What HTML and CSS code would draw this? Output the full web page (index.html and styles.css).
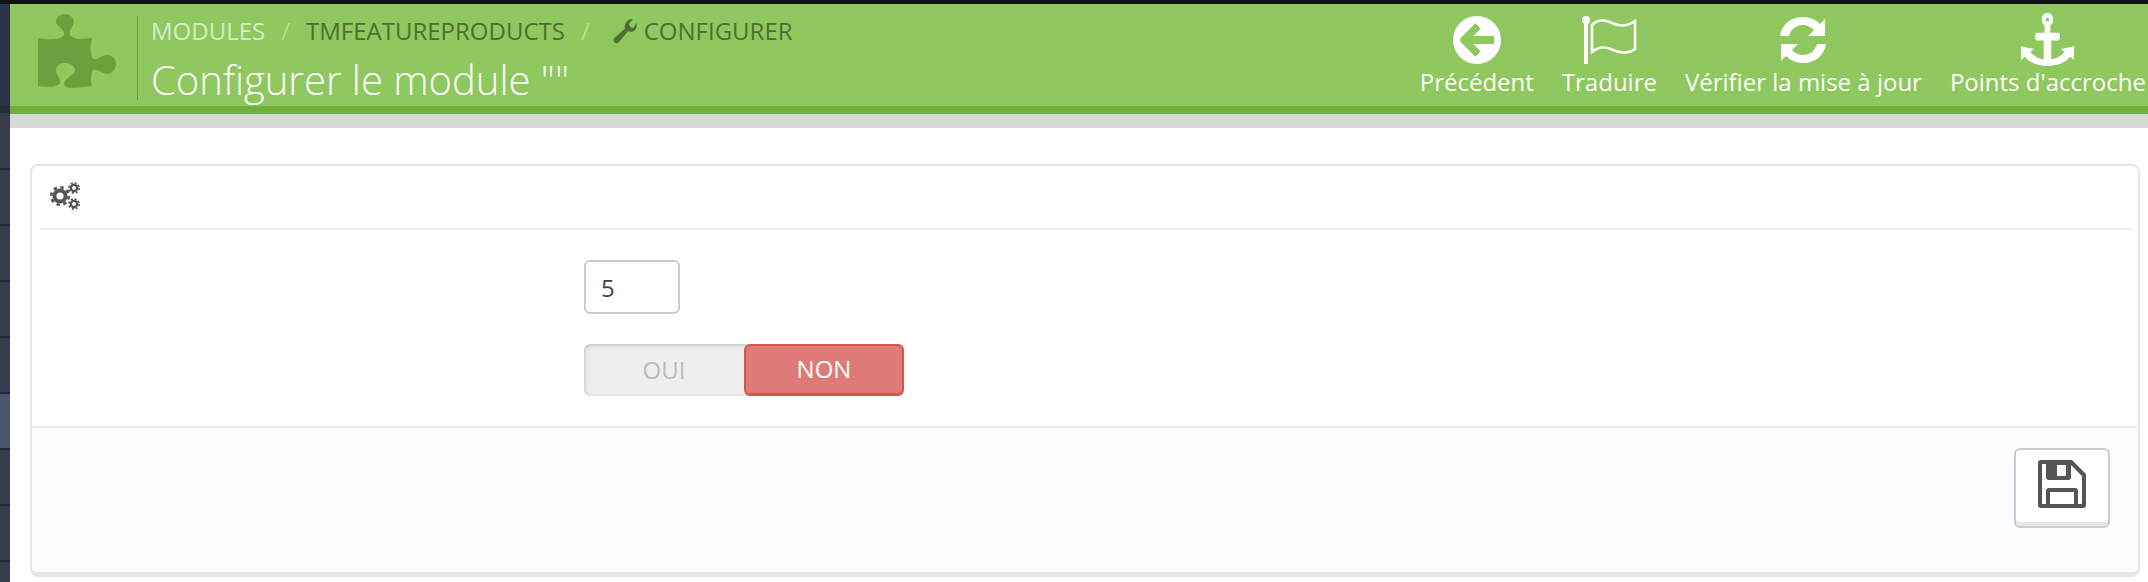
FILE: index.html
```html
<!DOCTYPE html>
<html lang="fr">
<head>
    <meta charset="UTF-8">
    <title>Configurer le module</title>
    <link rel="stylesheet" href="styles.css">
</head>
<body>
    <div class="page">
        <div class="sidebar">
            <div class="side-top"></div>
            <div class="side-top-edge"></div>
            <div class="side-item side-first"></div>
            <div class="side-item"></div>
            <div class="side-item"></div>
            <div class="side-item"></div>
            <div class="side-item"></div>
            <div class="side-item side-active"></div>
            <div class="side-item"></div>
            <div class="side-item"></div>
        </div>

        <div class="content">
            <div class="header">
                <svg class="logo" viewBox="0 0 80 76" width="80" height="76">
                    <path fill="#69a23c" d="M0 24 C12 26 22 26 26 21 C28 16 18 12 18 8 C18 2 24 0 27 0 C31 0 36 3 36 8 C36 12 30 16 32 21 C36 26 46 25 54 24 C52 32 52 40 55 45 C60 46 65 41 69 41 C75 41 78 46 78 50 C78 55 74 60 69 60 C65 60 60 55 55 56 C52 62 53 68 54 72 C46 73 38 74 33 74 C27 74 25 71 27 67 C30 63 37 60 37 56 C36 51 32 49 27 49 C21 49 18 52 18 56 C18 61 23 64 22 69 C20 74 6 73 0 72 Z"/>
                </svg>
                <div class="title-block">
                    <ul class="breadcrumb">
                        <li class="crumb-light">MODULES</li>
                        <li class="crumb-sep">/</li>
                        <li>TMFEATUREPRODUCTS</li>
                        <li class="crumb-sep">/</li>
                        <li class="crumb-icon">
                            <svg viewBox="0 0 24 24" width="26" height="26"><path fill="#4d6f32" d="M22.5 4.5 C23.5 7.5 22.5 11 19.5 12.2 C17.6 13 16 12.8 14.7 12.3 L6.5 22.2 C5.3 23.6 3.4 23.6 2.2 22.4 C1 21.2 1.1 19.4 2.4 18.3 L12 9.8 C11.3 7.5 12 4.8 14 2.8 C15.6 1.2 17.8 .6 19.5 1 L15.6 5.4 L17 8.6 L20 9 Z"/></svg>
                            CONFIGURER
                        </li>
                    </ul>
                    <h1 class="page-title">Configurer le module ""</h1>
                </div>
                <div class="toolbar">
                    <a class="tool">
                        <svg viewBox="0 0 48 48" width="48" height="48">
                            <circle cx="24" cy="24" r="24" fill="#fff"/>
                            <path fill="none" stroke="#8fc95e" stroke-width="7.5" stroke-linejoin="round" d="M25 10 L11 24 L25 38"/>
                            <path stroke="#8fc95e" stroke-width="8" d="M13 24 H41"/>
                        </svg>
                        <span>Précédent</span>
                    </a>
                    <a class="tool">
                        <svg viewBox="0 0 55 48" width="55" height="48">
                            <circle cx="4" cy="4" r="4" fill="#fff"/>
                            <path stroke="#fff" stroke-width="4" d="M4 6 V48"/>
                            <path fill="none" stroke="#fff" stroke-width="2.6" d="M10 9 C16 3 24 4 30 7 C38 11 46 10 53 5 V33 C46 38 38 37 31 34 C24 30 16 31 10 36 Z"/>
                        </svg>
                        <span>Traduire</span>
                    </a>
                    <a class="tool">
                        <svg viewBox="0 0 48 48" width="48" height="48">
                            <path fill="#fff" d="M1 20 C3 8 12 1 24 1 C31 1 37 4 41 8 L46 3 V20 H29 L35 14 C32 11 28 9 24 9 C17 9 12 13 10 20 Z"/>
                            <path fill="#fff" d="M47 28 C45 40 36 47 24 47 C17 47 11 44 7 40 L2 45 V28 H19 L13 34 C16 37 20 39 24 39 C31 39 36 35 38 28 Z"/>
                        </svg>
                        <span>Vérifier la mise à jour</span>
                    </a>
                    <a class="tool tool-last">
                        <svg viewBox="0 0 58 56" width="55" height="55">
                            <path fill="#fff" fill-rule="evenodd" d="M29 0 C33 0 35 3 35 7 C35 10 34 12 32 13 V21 H40 C41 21 42 22 42 23 V27 C42 28 41 29 40 29 H33 V49 C40 48 45 44 47 41 L43 38 L57 35 V50 L53 46 C49 52 39 56 29 56 C19 56 9 52 5 46 L1 50 V35 L15 38 L11 41 C13 44 18 48 25 49 V29 H18 C17 29 16 28 16 27 V23 C16 22 17 21 18 21 H26 V13 C24 12 23 10 23 7 C23 3 25 0 29 0 Z M29 5 C28 5 27 6 27 7 C27 8 28 9 29 9 C30 9 31 8 31 7 C31 6 30 5 29 5 Z"/>
                        </svg>
                        <span>Points d'accroche</span>
                    </a>
                </div>
            </div>
            <div class="header-border"></div>
            <div class="header-shadow"></div>

            <div class="panel">
                <div class="panel-heading">
                    <svg viewBox="0 0 30 28" width="30" height="28" fill="none" stroke="#555">
                        <circle cx="10" cy="14" r="5.6" stroke-width="4"/>
                        <circle cx="10" cy="14" r="8.8" stroke-width="2.6" stroke-dasharray="3.5 3.41"/>
                        <circle cx="24" cy="6" r="3.2" stroke-width="2.2"/>
                        <circle cx="24" cy="6" r="5" stroke-width="1.8" stroke-dasharray="2 1.93"/>
                        <circle cx="24" cy="22" r="3.2" stroke-width="2.2"/>
                        <circle cx="24" cy="22" r="5" stroke-width="1.8" stroke-dasharray="2 1.93"/>
                    </svg>
                </div>
                <div class="form-body">
                    <input class="qty-input" type="text" value="5">
                    <div class="switch">
                        <span class="switch-off">OUI</span>
                        <span class="switch-on">NON</span>
                    </div>
                </div>
                <div class="panel-footer">
                    <button class="save-btn">
                        <svg viewBox="0 0 48 48" width="48" height="48">
                            <path fill="#555" fill-rule="evenodd" d="M3 0 H34 L48 14 V45 C48 47 47 48 45 48 H3 C1 48 0 47 0 45 V3 C0 1 1 0 3 0 Z M8 4 H5 C4.4 4 4 4.4 4 5 V43 C4 43.6 4.4 44 5 44 H8 V31 C8 29 9 28 11 28 H37 C39 28 40 29 40 31 V44 H43 C43.6 44 44 43.6 44 43 V16 L33 5 V17 C33 19 32 20 30 20 H11 C9 20 8 19 8 17 Z M12 32 V44 H36 V32 Z M19 5 V16 H27 C28 16 28 15 28 14 V5 Z"/>
                        </svg>
                    </button>
                </div>
            </div>
        </div>
    </div>
</body>
</html>
```

FILE: styles.css
```css
* {
    box-sizing: border-box;
}

html, body {
    margin: 0;
    height: 100%;
    overflow: hidden;
}

body {
    font-family: "Open Sans", "Noto Sans", sans-serif;
    background-color: #fff;
    color: #555;
}

.page {
    display: flex;
    height: 582px;
    border-top: 4px solid #111;
}

.sidebar {
    width: 10px;
    flex-shrink: 0;
    display: flex;
    flex-direction: column;
    background-color: #373d4f;
}

.side-top {
    height: 102px;
    background-color: #2d3347;
}

.side-top-edge {
    height: 7px;
    background-color: #272c3d;
}

.side-item {
    height: 56px;
    flex-shrink: 0;
    border-bottom: 2px solid #22283a;
}

.side-first {
    height: 57px;
}

.side-active {
    background-color: #4b556f;
}

.content {
    flex: 1;
    min-width: 0;
}

.header {
    display: flex;
    height: 102px;
    background-color: #8ec85e;
    padding-left: 28px;
}

.logo {
    flex-shrink: 0;
    margin-top: 10px;
}

.title-block {
    margin-left: 19px;
    margin-top: 12px;
    height: 84px;
    border-left: 1px solid #6ea43f;
    padding-left: 13px;
}

.breadcrumb {
    display: flex;
    align-items: center;
    gap: 14px;
    list-style: none;
    margin: 0;
    padding: 0;
    font-size: 24px;
    line-height: 30px;
    color: #4d6f32;
    white-space: nowrap;
}

.crumb-light {
    color: #d6ecc3;
}

.crumb-sep {
    color: #b9dc9a;
    padding: 0 2px;
}

.crumb-icon {
    display: flex;
    align-items: center;
    gap: 6px;
    margin-left: 6px;
}

.page-title {
    margin: 11px 0 0;
    font-size: 40px;
    font-weight: 300;
    line-height: 45px;
    color: #fff;
    white-space: nowrap;
}

.toolbar {
    display: flex;
    margin-left: auto;
    gap: 28px;
    padding-right: 2px;
}

.tool {
    display: flex;
    flex-direction: column;
    align-items: center;
    height: 102px;
    padding-top: 12px;
    color: #fff;
    font-size: 24px;
    line-height: 30px;
    white-space: nowrap;
}

.tool svg {
    display: block;
    margin-bottom: 3px;
}

.tool-last {
    padding-top: 8px;
}

.tool-last svg {
    margin-bottom: 0;
}

.header-border {
    height: 8px;
    background-color: #71b03d;
}

.header-shadow {
    height: 14px;
    background-color: #d8d8d8;
}

.panel {
    margin: 36px 8px 0 20px;
    height: 413px;
    border: 2px solid #e6e6e6;
    border-bottom-width: 5px;
    border-radius: 8px;
    display: flex;
    flex-direction: column;
    background-color: #fff;
}

.panel-heading {
    height: 64px;
    margin: 0 6px 0 8px;
    padding: 16px 0 0 10px;
    border-bottom: 2px solid #eee;
}

.panel-heading svg {
    display: block;
}

.form-body {
    height: 198px;
    padding: 30px 0 0 552px;
    border-bottom: 2px solid #eee;
}

.qty-input {
    display: block;
    width: 96px;
    height: 54px;
    padding: 0 15px;
    border: 2px solid #ccc;
    border-radius: 6px;
    font-family: inherit;
    font-size: 24px;
    color: #444;
    background-color: #fff;
}

.switch {
    display: flex;
    width: 320px;
    height: 52px;
    margin-top: 30px;
    font-size: 24px;
    border-radius: 6px;
    background-color: #eee;
    box-shadow: inset 0 2px 4px rgba(0, 0, 0, 0.14), inset 2px 0 4px rgba(0, 0, 0, 0.06);
}

.switch-off,
.switch-on {
    width: 160px;
    display: flex;
    align-items: center;
    justify-content: center;
    padding-bottom: 2px;
}

.switch-off {
    color: #bbb;
}

.switch-on {
    color: #fff;
    background-color: #e07a78;
    border: 2px solid #d9534f;
    border-bottom-width: 3px;
    border-radius: 6px;
}

.panel-footer {
    flex: 1;
    background-color: #fcfdfe;
    border-radius: 0 0 6px 6px;
    display: flex;
    justify-content: flex-end;
    align-items: flex-start;
    padding: 20px 28px 0 0;
}

.save-btn {
    display: flex;
    justify-content: center;
    padding: 10px 0 0;
    width: 96px;
    height: 80px;
    background-color: #fff;
    border: 2px solid #ccc;
    border-radius: 6px;
    box-shadow: inset 0 -4px 0 #e6e6e6;
}
```
